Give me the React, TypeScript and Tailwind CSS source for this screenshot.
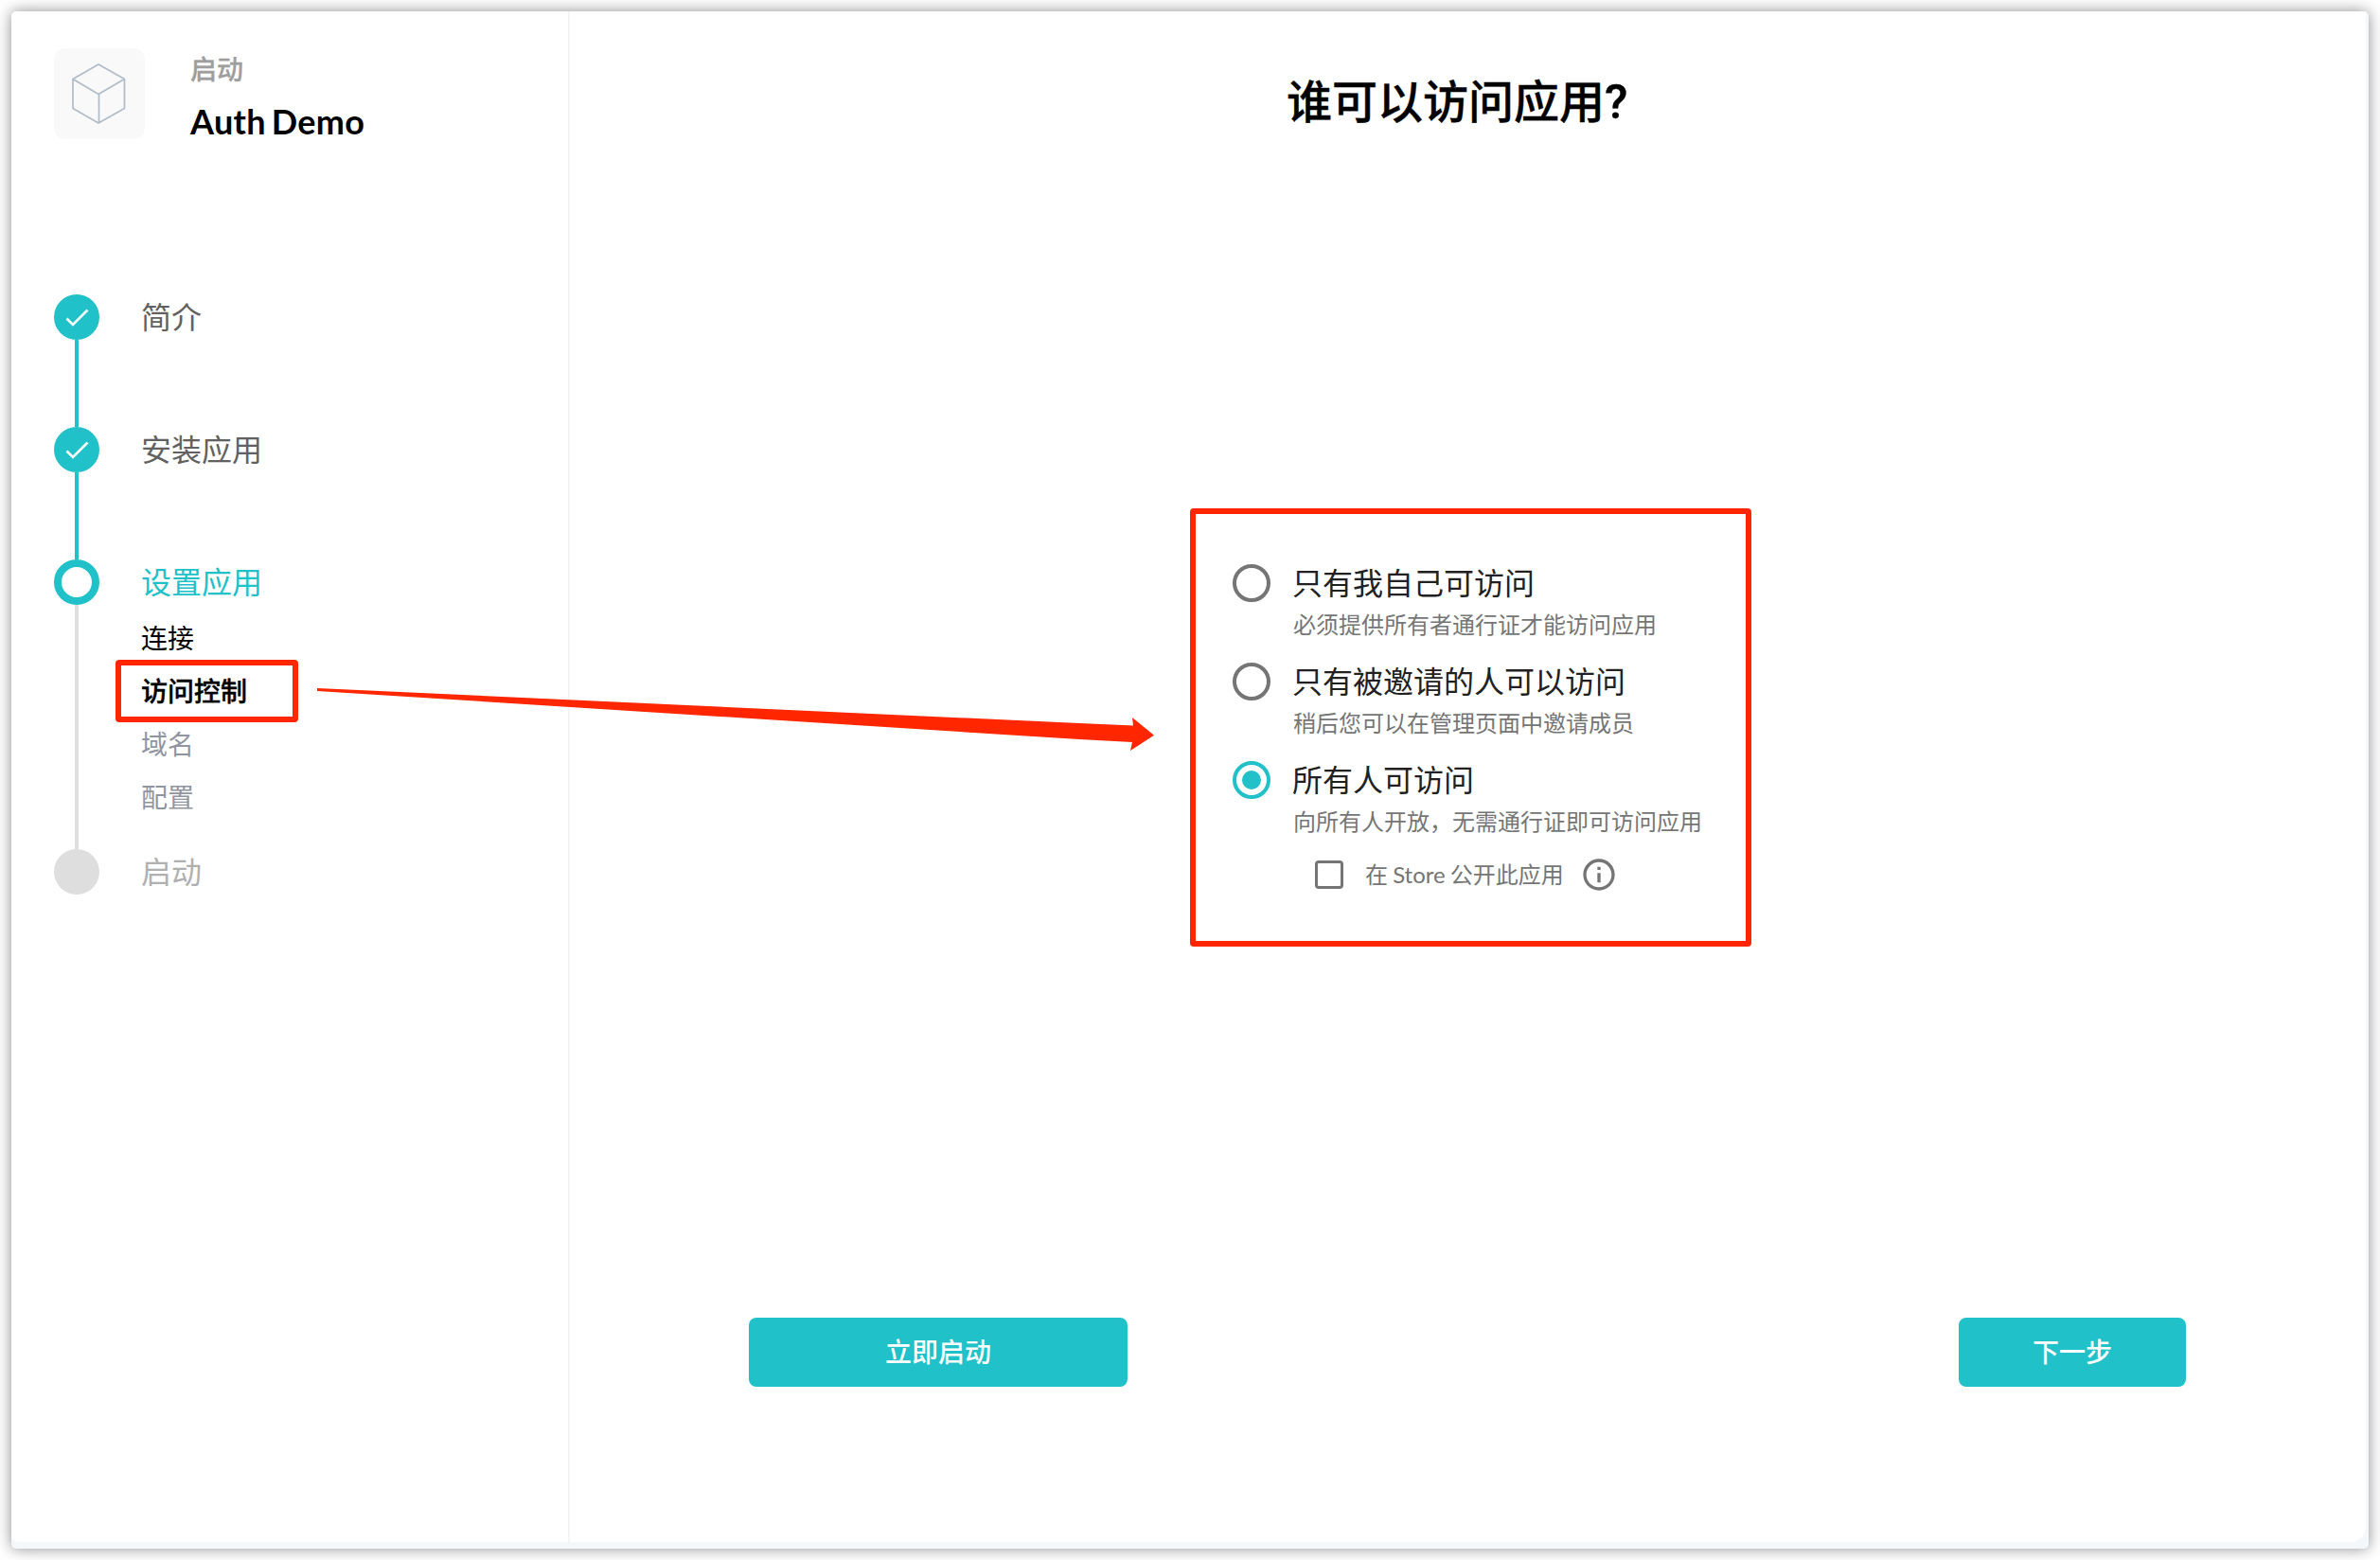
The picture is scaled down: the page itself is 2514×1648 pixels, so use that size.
import React from "react";

const subItems = [
  { label: "连接", style: "text-black" },
  { label: "访问控制", style: "font-medium text-black [-webkit-text-stroke:0.4px]", marked: true },
  { label: "域名", style: "text-[#9095a1]" },
  { label: "配置", style: "text-[#9095a1]" },
];

const options = [
  { title: "只有我自己可访问", note: "必须提供所有者通行证才能访问应用", checked: false },
  { title: "只有被邀请的人可以访问", note: "稍后您可以在管理页面中邀请成员", checked: false },
  { title: "所有人可访问", note: "向所有人开放，无需通行证即可访问应用", checked: true },
];

function CubeIcon() {
  return (
    <svg viewBox="0 0 96 96" className="size-24" fill="none" stroke="#b0bcc8" strokeWidth="1.7" strokeLinejoin="round">
      <path d="M47 17 74.500 32.500V63.500L47 79 20 63.500V32.500ZM20 32.500 47 48.500 74.500 32.500M47.500 48.500V79" />
    </svg>
  );
}

function DoneDot() {
  return (
    <div className="flex size-12 shrink-0 items-center justify-center rounded-full bg-[#20c1c8]">
      <svg viewBox="0 0 48 48" className="size-12" fill="none" stroke="#fff" strokeWidth="2.6">
        <path d="M13.500 25.500 20 32 35.500 16.500" />
      </svg>
    </div>
  );
}

function Radio({ checked }: { checked: boolean }) {
  return checked ? (
    <span className="flex size-10 shrink-0 items-center justify-center rounded-full border-4 border-[#20c1c8]">
      <span className="size-5 rounded-full bg-[#20c1c8]" />
    </span>
  ) : (
    <span className="size-10 shrink-0 rounded-full border-4 border-[#757575]" />
  );
}

function InfoIcon() {
  return (
    <svg viewBox="0 0 24 24" className="size-10" fill="#757575">
      <path d="M11 7h2v2h-2zm0 4h2v6h-2zm1-9C6.480 2 2 6.480 2 12s4.480 10 10 10 10-4.480 10-10S17.520 2 12 2zm0 18c-4.410 0-8-3.590-8-8s3.590-8 8-8 8 3.590 8 8-3.590 8-8 8z" />
    </svg>
  );
}

function Sidebar() {
  return (
    <aside className="flex w-[590px] shrink-0 flex-col border-r-2 border-[#f5f5f5] pt-[39px] pl-[45px]">
      <header className="flex h-24 gap-12">
        <div className="size-24 rounded-xl bg-[#f9f9f9]">
          <CubeIcon />
        </div>
        <div className="flex flex-col">
          <span className="mt-[2px] text-[28px] leading-10 font-medium text-[#9e9e9e] [-webkit-text-stroke:0.3px]">启动</span>
          <span className="mt-[11px] text-[36px] leading-[48px] font-bold tracking-[0.3px] text-black [word-spacing:-3px]">Auth Demo</span>
        </div>
      </header>

      <ol className="mt-[164px] text-[32px] leading-[48px]">
        {["简介", "安装应用"].map((label) => (
          <li key={label} className="flex h-[140px] gap-11">
            <div className="flex flex-col items-center">
              <DoneDot />
              <div className="w-1 grow bg-[#20c1c8]" />
            </div>
            <span className="text-[#616161]">{label}</span>
          </li>
        ))}
        <li className="flex h-[306px] gap-11">
          <div className="flex flex-col items-center">
            <div className="size-12 shrink-0 rounded-full border-8 border-[#20c1c8]" />
            <div className="w-1 grow bg-[#dedede]" />
          </div>
          <div>
            <span className="block text-[#20c1c8]">设置应用</span>
            <ul className="mt-[7px] text-[28px] leading-[56px]">
              {subItems.map((item) => (
                <li key={item.label} className="relative h-14">
                  <span className={item.style}>{item.label}</span>
                  {item.marked && (
                    <span className="absolute -top-[5px] -left-[27px] h-[66px] w-[193px] rounded-[4px] border-6 border-[#ff2600]" />
                  )}
                </li>
              ))}
            </ul>
          </div>
        </li>
        <li className="flex gap-11">
          <div className="size-12 rounded-full bg-[#dedede]" />
          <span className="text-[#b0b0b0]">启动</span>
        </li>
      </ol>
    </aside>
  );
}

function AccessOptions() {
  return (
    <section className="mt-[393px] ml-[655px] h-[463px] w-[593px] rounded-[4px] border-6 border-[#ff2600] pt-[53px] pl-[39px]">
      {options.map((o) => (
        <div key={o.title} className="flex h-[104px] gap-[23px]">
          <Radio checked={o.checked} />
          <div>
            <p className="text-[32px] leading-10 text-[#212121]">{o.title}</p>
            <p className="mt-1.5 ml-px text-[24px] leading-9 text-[#757575]">{o.note}</p>
          </div>
        </div>
      ))}
      <div className="flex h-8 items-center pl-[87px]">
        <span className="size-[30px] rounded-[4px] border-[3px] border-[#757575]" />
        <span className="ml-[23px] text-[24px] leading-8 text-[#757575] [word-spacing:-1px]">在 Store 公开此应用</span>
        <span className="ml-[17px]">
          <InfoIcon />
        </span>
      </div>
    </section>
  );
}

export default function App() {
  return (
    <div className="relative h-[1648px] w-[2514px] overflow-hidden bg-white p-3 font-[Lato,'Noto_Sans_CJK_SC',sans-serif]">
      <div className="h-[1624px] w-[2490px] rounded-[5px] bg-[#f4f8fb] shadow-[0_0_16px_rgba(0,0,0,0.45)]">
        <div className="flex h-[1617px] w-[2487px] rounded-tl-[5px] rounded-br-2xl rounded-bl-lg bg-white">
          <Sidebar />
          <main className="flex grow flex-col">
            <h1 className="mt-[59px] ml-[757px] h-[73px] text-[48px] leading-[72px] font-medium text-black [-webkit-text-stroke:0.4px]">
              谁可以访问应用<span className="font-['Roboto'] text-[50px] leading-none">?</span>
            </h1>
            <AccessOptions />
            <footer className="mt-[392px] flex justify-between pr-[190px] pl-[189px] text-[28px] leading-[73px] font-medium text-white">
              <button className="h-[73px] w-[400px] rounded-lg bg-[#20c1c8]">立即启动</button>
              <button className="h-[73px] w-[240px] rounded-lg bg-[#20c1c8]">下一步</button>
            </footer>
          </main>
        </div>
      </div>
      <svg className="absolute top-[720px] left-[330px] h-20 w-[900px]" viewBox="330 720 900 80" fill="#ff2600">
        <path d="M335 727 1140 764 1197 766.500 1196 758 1219 776.700 1194 793 1196 784 1140 781 335 730Z" />
      </svg>
    </div>
  );
}
